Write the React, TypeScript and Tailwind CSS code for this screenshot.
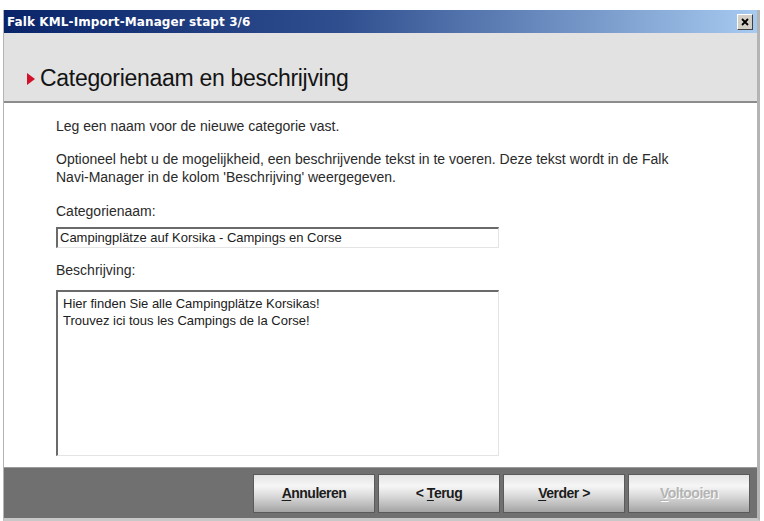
import React from "react";

function Btn({ children, disabled }: { children: React.ReactNode; disabled?: boolean }) {
  return (
    <div
      className={
        "w-[122px] h-[39px] flex items-center justify-center border border-[#5a5a5a] bg-[linear-gradient(to_bottom,#e4e4e4_0%,#f6f6f6_30%,#dcdcdc_55%,#a4a4a4_100%)] text-[14px] font-bold tracking-[-0.5px] " +
        (disabled ? "text-[#b4b4b4] [text-shadow:1px_1px_0_#ffffff]" : "text-[#1c1c1c]")
      }
      style={{ fontFamily: '"Liberation Sans", Arial, sans-serif' }}
    >
      <span className="whitespace-pre">{children}</span>
    </div>
  );
}

export default function App() {
  const sans = { fontFamily: '"Liberation Sans", Arial, sans-serif' };
  return (
    <div className="w-[764px] h-[521px] bg-white overflow-hidden pt-[10px] pl-[3px]" style={sans}>
      <div className="w-[757px] h-[511px] flex flex-col border-l border-r-[3px] border-[#b4b4b4] border-b-[3px] border-b-[#c8c8c8]">
        {/* title bar */}
        <div className="h-[23px] shrink-0 flex items-center justify-between pl-[3px] pr-[4px] bg-[linear-gradient(to_right,#0a246a_0%,#2f4f8f_45%,#a6caf0_100%)]">
          <span className="text-white text-[12px] font-bold leading-none tracking-[0.1px]" style={{ fontFamily: '"DejaVu Sans", Verdana, sans-serif' }}>
            Falk KML-Import-Manager stapt 3/6
          </span>
          <div className="w-[16px] h-[16px] bg-[#d4d0c8] border border-t-white border-l-white border-r-[#404040] border-b-[#404040] flex items-center justify-center">
            <svg width="8" height="8" viewBox="0 0 8 8">
              <path d="M1 1 L7 7 M7 1 L1 7" stroke="#000" strokeWidth="1.8" />
            </svg>
          </div>
        </div>
        {/* header */}
        <div className="h-[70px] shrink-0 bg-[#e2e2e2] border-b-2 border-[#8c8c8c] flex items-end pb-[11px] pl-[23px]">
          <div className="flex items-center gap-[5px]">
            <svg width="8" height="12" viewBox="0 0 8 12">
              <path d="M0 0 L8 6 L0 12 Z" fill="#d2102a" />
            </svg>
            <span className="text-[23px] text-[#141414] leading-none tracking-[-0.3px]">Categorienaam en beschrijving</span>
          </div>
        </div>
        {/* content */}
        <div className="flex-1 bg-white pl-[52px] pt-[14px] text-[14px] text-[#2a2a2a] leading-[18px]">
          <p>Leg een naam voor de nieuwe categorie vast.</p>
          <p className="mt-[15px] w-[680px]">
            Optioneel hebt u de mogelijkheid, een beschrijvende tekst in te voeren. Deze tekst wordt in de Falk
            <br />
            Navi-Manager in de kolom 'Beschrijving' weergegeven.
          </p>
          <p className="mt-[16px]">Categorienaam:</p>
          <div className="mt-[7px] w-[443px] h-[21px] border-t-2 border-l-2 border-t-[#6a6a6a] border-l-[#6a6a6a] border-r border-b border-r-[#e4e4e4] border-b-[#e4e4e4] flex items-center pl-[2px] text-[13px] text-[#202020]">
            Campingplätze auf Korsika - Campings en Corse
          </div>
          <p className="mt-[13px]">Beschrijving:</p>
          <div className="mt-[11px] w-[443px] h-[166px] border-t-2 border-l-2 border-t-[#6a6a6a] border-l-[#6a6a6a] border-r border-b border-r-[#e4e4e4] border-b-[#e4e4e4] pl-[5px] pt-[3px] text-[13px] leading-[17px] text-[#202020]">
            <div>Hier finden Sie alle Campingplätze Korsikas!</div>
            <div>Trouvez ici tous les Campings de la Corse!</div>
          </div>
        </div>
        {/* footer */}
        <div className="h-[51px] shrink-0 bg-[#707070] border-t border-[#9a9a9a] flex items-center justify-end gap-[3px] pr-[7px] pt-[1px]">
          <Btn><span className="underline underline-offset-2">A</span>nnuleren</Btn>
          <Btn>{"< "}<span className="underline underline-offset-2">T</span>erug</Btn>
          <Btn><span className="underline underline-offset-2">V</span>erder{" >"}</Btn>
          <Btn disabled><span className="underline underline-offset-2">V</span>oltooien</Btn>
        </div>
      </div>
    </div>
  );
}
